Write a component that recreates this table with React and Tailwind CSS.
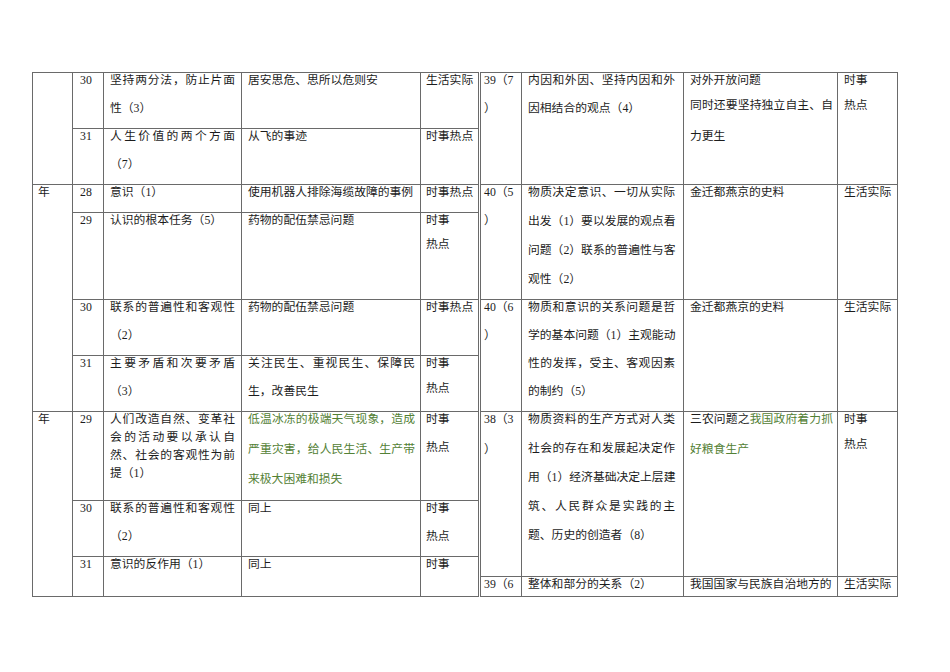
import { Fragment } from "react";

const LINE_H = {
  18: "h-[18px]",
  24: "h-[24px]",
  25: "h-[25px]",
  28: "h-[28px]",
  29: "h-[29px]",
  30: "h-[30px]",
  31: "h-[31px]",
};

// "{...}" marks the green part of a line
function rich(text) {
  return text.split(/(\{[^}]*\})/).map((part, i) =>
    part.startsWith("{") ? (
      <span key={i} className="text-[#538135]">
        {part.slice(1, -1)}
      </span>
    ) : (
      part
    )
  );
}

// paras: list of paragraphs; "|" splits a paragraph into its wrapped lines.
// A paragraph may be [text, pitch] to give it its own line pitch.
function Cell({ paras = [], pitch = 28, pad = "", span = "", green = false }) {
  return (
    <div className={`border-r border-b border-[#6a6a6a] overflow-hidden ${pad} ${span} ${green ? "text-[#538135]" : ""}`}>
      {paras.map((para, i) => {
        const [text, h] = Array.isArray(para) ? para : [para, pitch];
        const lines = text.split("|");
        return lines.map((line, j) => (
          <div
            key={`${i}-${j}`}
            className={`${LINE_H[h]} leading-[15px] whitespace-nowrap ${
              j < lines.length - 1 ? "text-justify [text-align-last:justify]" : ""
            }`}
          >
            {rich(line)}
          </div>
        ));
      })}
    </div>
  );
}

const LEFT_PAD = ["pl-[5px]", "pl-[7px]", "pl-[6px] pr-[6px]", "pl-[6px] pr-[5px]", "pl-[5px] pr-[2px]"];
const RIGHT_PAD = ["pl-[3px]", "pl-[6px] pr-[8px]", "pl-[6px] pr-[4px]", "pl-[6px]"];

const leftRows = [
  { no: "30", topic: ["坚持两分法，防止片面|性（3）"], story: ["居安思危、思所以危则安"], kind: ["生活实际"] },
  { no: "31", topic: ["人生价值的两个方面|（7）"], story: ["从飞的事迹"], kind: ["时事热点"] },
  { no: "28", topic: ["意识（1）"], story: ["使用机器人排除海缆故障的事例"], kind: ["时事热点"] },
  { no: "29", topic: ["认识的根本任务（5）"], story: ["药物的配伍禁忌问题"], kind: ["时事", "热点"], kindPitch: 24 },
  { no: "30", topic: ["联系的普遍性和客观性|（2）"], story: ["药物的配伍禁忌问题"], kind: ["时事热点"] },
  { no: "31", topic: ["主要矛盾和次要矛盾|（3）"], story: ["关注民生、重视民生、保障民|生，改善民生"], kind: ["时事", "热点"], kindPitch: 25 },
  {
    no: "29",
    topic: ["人们改造自然、变革社|会的活动要以承认自|然、社会的客观性为前|提（1）"],
    topicPitch: 18,
    story: ["低温冰冻的极端天气现象，造成|严重灾害，给人民生活、生产带|来极大困难和损失"],
    storyPitch: 30,
    green: true,
    kind: ["时事", "热点"],
  },
  { no: "30", topic: ["联系的普遍性和客观性|（2）"], story: ["同上"], kind: ["时事", "热点"] },
  { no: "31", topic: ["意识的反作用（1）"], story: ["同上"], kind: ["时事"] },
];

// first column of the left half, keyed by the row it starts on
const yearCells = { 0: ["", "row-span-2"], 2: ["年", "row-span-4"], 6: ["年", "row-span-3"] };

const rightRows = [
  {
    no: ["39（7", "）"],
    topic: ["内因和外因、坚持内因和外|因相结合的观点（4）"],
    story: [["对外开放问题", 25], ["同时还要坚持独立自主、自|力更生", 31]],
    kind: ["时事", "热点"],
    kindPitch: 25,
  },
  {
    no: ["40（5", "）"],
    topic: ["物质决定意识、一切从实际|出发（1）要以发展的观点看|问题（2）联系的普遍性与客|观性（2）"],
    topicPitch: 29,
    story: ["金迁都燕京的史料"],
    kind: ["生活实际"],
  },
  {
    no: ["40（6", "）"],
    topic: ["物质和意识的关系问题是哲|学的基本问题（1）主观能动|性的发挥，受主、客观因素|的制约（5）"],
    story: ["金迁都燕京的史料"],
    kind: ["生活实际"],
  },
  {
    no: ["38（3", "）"],
    noPitch: 30,
    topic: ["物质资料的生产方式对人类|社会的存在和发展起决定作|用（1）经济基础决定上层建|筑、人民群众是实践的主|题、历史的创造者（8）"],
    topicPitch: 29,
    story: ["三农问题之{我国政府着力抓}|{好粮食生产}"],
    storyPitch: 30,
    kind: ["时事", "热点"],
    kindPitch: 25,
  },
  { no: ["39（6"], topic: ["整体和部分的关系（2）"], story: ["我国国家与民族自治地方的"], kind: ["生活实际"] },
];

export default function App() {
  return (
    <div className="bg-white min-h-[672px] pt-[72px] pl-[32px] flex gap-px text-[11.8px] text-[#1c1c1c] font-['Liberation_Serif','Noto_Sans_CJK_SC',serif]">
      <div className="grid grid-cols-[40px_31px_138px_179px_58px] grid-rows-[56px_56px_28px_87px_56px_56px_89px_56px_40px] border-l border-t border-[#6a6a6a] self-start">
        {leftRows.map((r, i) => (
          <Fragment key={i}>
            {yearCells[i] && (
              <Cell paras={yearCells[i][0] ? [yearCells[i][0]] : []} pad={LEFT_PAD[0]} span={yearCells[i][1]} />
            )}
            <Cell paras={[r.no]} pad={LEFT_PAD[1]} />
            <Cell paras={r.topic} pitch={r.topicPitch || 28} pad={LEFT_PAD[2]} />
            <Cell paras={r.story} pitch={r.storyPitch || 28} pad={LEFT_PAD[3]} green={r.green} />
            <Cell paras={r.kind} pitch={r.kindPitch || 28} pad={LEFT_PAD[4]} />
          </Fragment>
        ))}
      </div>

      <div className="grid grid-cols-[41px_162px_154px_60px] grid-rows-[112px_115px_112px_165px_20px] border-l border-t border-[#6a6a6a] self-start">
        {rightRows.map((r, i) => (
          <Fragment key={i}>
            <Cell paras={r.no} pitch={r.noPitch || 28} pad={RIGHT_PAD[0]} />
            <Cell paras={r.topic} pitch={r.topicPitch || 28} pad={RIGHT_PAD[1]} />
            <Cell paras={r.story} pitch={r.storyPitch || 28} pad={RIGHT_PAD[2]} />
            <Cell paras={r.kind} pitch={r.kindPitch || 28} pad={RIGHT_PAD[3]} />
          </Fragment>
        ))}
      </div>
    </div>
  );
}
